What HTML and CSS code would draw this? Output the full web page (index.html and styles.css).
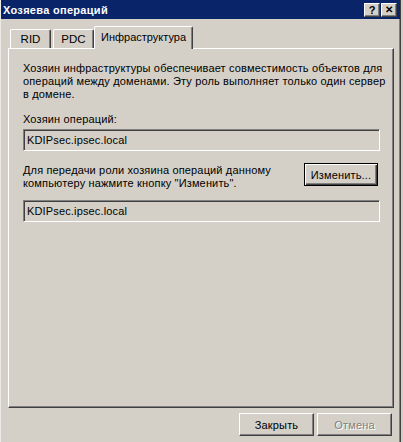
FILE: index.html
```html
<!DOCTYPE html>
<html lang="ru">
<head>
    <meta charset="UTF-8">
    <title>Хозяева операций</title>
    <link rel="stylesheet" href="styles.css">
</head>
<body>

<div class="window">
    <div class="titlebar">
        <span class="title">Хозяева операций</span>
        <div class="caption-buttons">
            <span class="cap-btn">?</span>
            <span class="cap-btn close">&#x2715;</span>
        </div>
    </div>

    <div class="tabs">
        <div class="tab">RID</div>
        <div class="tab">PDC</div>
        <div class="tab active">Инфраструктура</div>
    </div>

    <div class="panel">
        <p class="desc">Хозяин инфраструктуры обеспечивает совместимость объектов для операций между доменами. Эту роль выполняет только один сервер в домене.</p>

        <div class="label">Хозяин операций:</div>
        <div class="field">KDIPsec.ipsec.local</div>

        <div class="transfer">
            <p class="transfer-text">Для передачи роли хозяина операций данному компьютеру нажмите кнопку "Изменить".</p>
            <button class="btn default">Изменить...</button>
        </div>

        <div class="field">KDIPsec.ipsec.local</div>
    </div>

    <div class="footer">
        <button class="btn">Закрыть</button>
        <button class="btn" disabled>Отмена</button>
    </div>
</div>

</body>
</html>
```

FILE: styles.css
```css
body {
    margin: 0;
    padding: 0;
    background-color: #d4d0c8;
    font-family: "Liberation Sans", Arial, sans-serif;
    font-size: 11px;
    letter-spacing: 0.15px;
    color: #000;
}

.window {
    width: 401px;
    height: 442px;
    box-sizing: border-box;
    background-color: #d4d0c8;
    border-left: 1px solid #ecebe7;
    border-right: 1px solid #404040;
    box-shadow: inset -1px 0 0 #808080;
}

/* Заголовок окна */
.titlebar {
    height: 19px;
    background-color: #0a246a;
    display: flex;
    align-items: center;
    justify-content: space-between;
    padding: 0 3px 0 2px;
}

.title {
    color: #fff;
    font-weight: bold;
    font-size: 11px;
    letter-spacing: 0.3px;
}

.caption-buttons {
    display: flex;
    gap: 1px;
    margin-top: 1px;
}

.cap-btn {
    width: 16px;
    height: 14px;
    box-sizing: border-box;
    background-color: #d4d0c8;
    border-top: 1px solid #fff;
    border-left: 1px solid #fff;
    border-right: 1px solid #404040;
    border-bottom: 1px solid #404040;
    box-shadow: inset -1px -1px 0 #808080;
    display: flex;
    align-items: center;
    justify-content: center;
    font-weight: bold;
    font-size: 11px;
    letter-spacing: 0;
    line-height: 1;
    color: #000;
}

.cap-btn.close {
    font-size: 10px;
}

/* Вкладки */
.tabs {
    display: flex;
    align-items: flex-end;
    padding-left: 9px;
    margin-top: 7px;
    height: 22px;
    position: relative;
    z-index: 1;
}

.tab {
    height: 19px;
    box-sizing: border-box;
    margin-right: 2px;
    border-top: 1px solid #fff;
    border-left: 1px solid #fff;
    border-right: 1px solid #404040;
    box-shadow: inset -1px 0 0 #808080;
    border-top-left-radius: 2px;
    border-top-right-radius: 2px;
    display: flex;
    align-items: center;
    justify-content: center;
    width: 41px;
    font-size: 11.5px;
    letter-spacing: 0;
}

.tab.active {
    height: 23px;
    margin-left: -2px;
    margin-bottom: -1px;
    width: 99px;
    padding-bottom: 2px;
    background-color: #d4d0c8;
    font-size: 11px;
}

/* Панель вкладки */
.panel {
    margin-left: 7px;
    width: 386px;
    height: 360px;
    box-sizing: border-box;
    border-top: 1px solid #fff;
    border-left: 1px solid #fff;
    border-right: 1px solid #404040;
    border-bottom: 1px solid #404040;
    box-shadow: inset -1px -1px 0 #808080;
    padding: 13px 0 0 14px;
}

.desc {
    margin: 0;
    line-height: 13px;
    width: 366px;
}

.label {
    margin-top: 12px;
    line-height: 13px;
}

.field {
    margin-top: 3px;
    width: 357px;
    height: 22px;
    box-sizing: border-box;
    border-top: 1px solid #808080;
    border-left: 1px solid #808080;
    border-right: 1px solid #fff;
    border-bottom: 1px solid #fff;
    box-shadow: inset 1px 1px 0 #404040, inset -1px -1px 0 #d4d0c8;
    padding: 0 3px;
    display: flex;
    align-items: center;
}

.transfer {
    display: flex;
    justify-content: space-between;
    align-items: flex-start;
    margin-top: 12px;
    width: 355px;
}

.transfer-text {
    margin: 1px 0 0 0;
    line-height: 13px;
    width: 270px;
}

.transfer + .field {
    margin-top: 10px;
}

/* Кнопки */
.btn {
    width: 75px;
    height: 23px;
    box-sizing: border-box;
    background-color: #d4d0c8;
    border-top: 1px solid #fff;
    border-left: 1px solid #fff;
    border-right: 1px solid #404040;
    border-bottom: 1px solid #404040;
    box-shadow: inset -1px -1px 0 #808080;
    border-radius: 0;
    padding: 0;
    font-family: "Liberation Sans", Arial, sans-serif;
    font-size: 11px;
    letter-spacing: 0.15px;
    color: #000;
    white-space: nowrap;
}

.btn.default {
    width: 74px;
    flex-shrink: 0;
    border: 1px solid #000;
    box-shadow: inset 1px 1px 0 #fff, inset -1px -1px 0 #404040, inset -2px -2px 0 #808080;
}

.btn:disabled {
    color: #808080;
    text-shadow: 1px 1px 0 #fff;
}

.footer {
    display: flex;
    justify-content: flex-end;
    gap: 3px;
    padding: 5px 8px 0 0;
}
```
